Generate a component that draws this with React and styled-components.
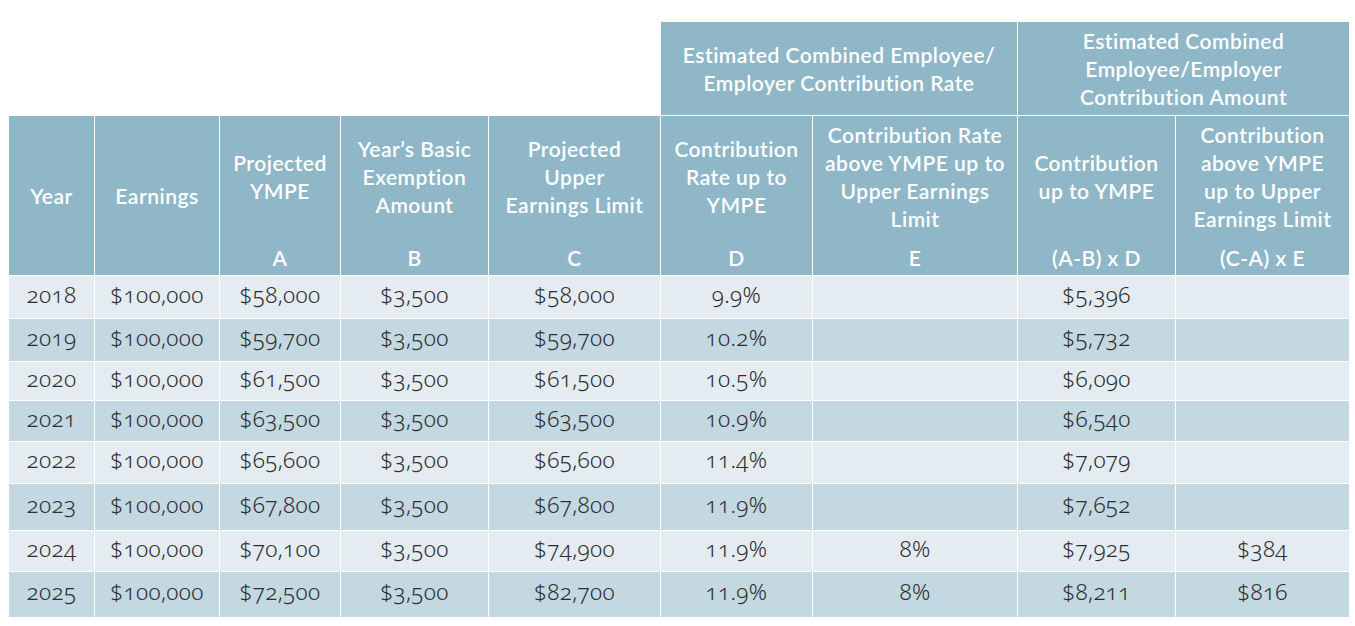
import React from "react";
import styled, { createGlobalStyle } from "styled-components";

const Global = createGlobalStyle`
  html, body { margin: 0; padding: 0; background: #ffffff; }
  body { font-family: "Noto Sans", "Liberation Sans", sans-serif; }
`;

const Page = styled.div`
  padding: 21px 0 0 8px;
  width: 1355px;
  height: 626px;
  box-sizing: border-box;
  overflow: hidden;
`;

const Table = styled.table`
  table-layout: fixed;
  border-collapse: separate;
  border-spacing: 1px;
  width: 1342px;
  background: #ffffff;
`;

const headText = `
  color: #ffffff;
  font-family: "Lato", "Noto Sans", sans-serif;
  font-weight: 600;
  font-size: 21px;
  line-height: 28px;
  text-align: center;
  letter-spacing: 0.5px;
`;

const GroupCell = styled.th`
  ${headText}
  height: 93px;
  padding: 0 4px;
  background: ${(p) => (p.$blank ? "#ffffff" : "#8fb7c8")};
  vertical-align: middle;
`;

const HeadCell = styled.th`
  ${headText}
  height: 159px;
  padding: 0;
  background: #8fb7c8;
  vertical-align: top;
`;

const HeadInner = styled.div`
  height: 159px;
  display: flex;
  flex-direction: column;
  box-sizing: border-box;
`;

const HeadTitle = styled.div`
  flex: 1;
  display: flex;
  align-items: center;
  justify-content: center;
  white-space: nowrap;
  padding-bottom: ${(p) => (p.$withKey ? "6px" : "0")};
`;

const HeadKey = styled.div`
  height: 28px;
  padding-bottom: 3px;
`;

const Row = styled.tr`
  height: ${(p) => p.$h}px;
`;

const Cell = styled.td`
  padding: 0 0 6px;
  background: ${(p) => (p.$alt ? "#c3d8e0" : "#e4ecf2")};
  color: #2e2e2e;
  font-family: "Noto Sans", "Lato", sans-serif;
  font-weight: 300;
  font-variant-numeric: oldstyle-nums;
  font-feature-settings: "onum" 1;
  font-size: 22.5px;
  letter-spacing: 0.35px;
  text-align: center;
  vertical-align: middle;
`;

const cols = [85, 124, 120, 147, 171, 151, 204, 157, 173];

const heads = [
  { t: ["Year"] },
  { t: ["Earnings"] },
  { t: ["Projected", "YMPE"], k: "A" },
  { t: ["Year’s Basic", "Exemption", "Amount"], k: "B" },
  { t: ["Projected", "Upper", "Earnings Limit"], k: "C" },
  { t: ["Contribution", "Rate up to", "YMPE"], k: "D" },
  { t: ["Contribution Rate", "above YMPE up to", "Upper Earnings", "Limit"], k: "E" },
  { t: ["Contribution", "up to YMPE"], k: "(A-B) x D" },
  { t: ["Contribution", "above YMPE", "up to Upper", "Earnings Limit"], k: "(C-A) x E" },
];

const rows = [
  { h: 42, v: ["2018", "$100,000", "$58,000", "$3,500", "$58,000", "9.9%", "", "$5,396", ""] },
  { h: 42, v: ["2019", "$100,000", "$59,700", "$3,500", "$59,700", "10.2%", "", "$5,732", ""] },
  { h: 38, v: ["2020", "$100,000", "$61,500", "$3,500", "$61,500", "10.5%", "", "$6,090", ""] },
  { h: 40, v: ["2021", "$100,000", "$63,500", "$3,500", "$63,500", "10.9%", "", "$6,540", ""] },
  { h: 41, v: ["2022", "$100,000", "$65,600", "$3,500", "$65,600", "11.4%", "", "$7,079", ""] },
  { h: 46, v: ["2023", "$100,000", "$67,800", "$3,500", "$67,800", "11.9%", "", "$7,652", ""] },
  { h: 40, v: ["2024", "$100,000", "$70,100", "$3,500", "$74,900", "11.9%", "8%", "$7,925", "$384"] },
  { h: 45, v: ["2025", "$100,000", "$72,500", "$3,500", "$82,700", "11.9%", "8%", "$8,211", "$816"] },
];

const Lines = ({ lines }) => (
  <div>
    {lines.map((l, i) => (
      <div key={i}>{l}</div>
    ))}
  </div>
);

export default function App() {
  return (
    <Page>
      <Global />
      <Table>
        <colgroup>
          {cols.map((w, i) => (
            <col key={i} style={{ width: w }} />
          ))}
        </colgroup>
        <thead>
          <tr>
            <GroupCell colSpan={5} $blank />
            <GroupCell colSpan={2}>
              <Lines lines={["Estimated Combined Employee/", "Employer Contribution Rate"]} />
            </GroupCell>
            <GroupCell colSpan={2}>
              <Lines lines={["Estimated Combined", "Employee/Employer", "Contribution Amount"]} />
            </GroupCell>
          </tr>
          <tr>
            {heads.map((h, i) => (
              <HeadCell key={i}>
                <HeadInner>
                  <HeadTitle $withKey={!!h.k}>
                    <Lines lines={h.t} />
                  </HeadTitle>
                  {h.k && <HeadKey>{h.k}</HeadKey>}
                </HeadInner>
              </HeadCell>
            ))}
          </tr>
        </thead>
        <tbody>
          {rows.map((r, i) => (
            <Row key={r.v[0]} $h={r.h}>
              {r.v.map((v, j) => (
                <Cell key={j} $alt={i % 2 === 1}>
                  {v}
                </Cell>
              ))}
            </Row>
          ))}
        </tbody>
      </Table>
    </Page>
  );
}
